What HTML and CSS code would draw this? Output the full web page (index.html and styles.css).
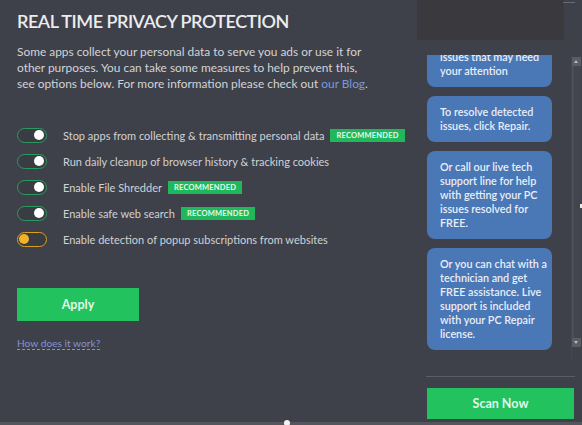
FILE: index.html
```html
<!DOCTYPE html>
<html lang="en">
<head>
<meta charset="utf-8">
<title>Real Time Privacy Protection</title>
<link rel="stylesheet" href="styles.css">
</head>
<body>
<div class="window">
  <main class="main">
    <h1 class="title">REAL TIME PRIVACY PROTECTION</h1>
    <p class="intro">Some apps collect your personal data to serve you ads or use it for<br>other purposes. You can take some measures to help prevent this,<br>see options below. For more information please check out <a class="blog" href="#">our Blog</a>.</p>
    <ul class="options">
      <li class="option"><span class="toggle on"></span><span class="label">Stop apps from collecting &amp; transmitting personal data</span><span class="badge">RECOMMENDED</span></li>
      <li class="option"><span class="toggle on"></span><span class="label">Run daily cleanup of browser history &amp; tracking cookies</span></li>
      <li class="option"><span class="toggle on"></span><span class="label">Enable File Shredder</span><span class="badge">RECOMMENDED</span></li>
      <li class="option"><span class="toggle on"></span><span class="label">Enable safe web search</span><span class="badge">RECOMMENDED</span></li>
      <li class="option"><span class="toggle off"></span><span class="label">Enable detection of popup subscriptions from websites</span></li>
    </ul>
    <button class="apply" type="button">Apply</button>
    <a class="how" href="#">How does it work?</a>
  </main>
  <aside class="side">
    <div class="side-top"><span class="top-mark"></span></div>
    <div class="chat-wrap">
      <div class="chat">
        <div class="chat-list">
          <div class="bubble">The scan has detected<br>issues that may need<br>your attention</div>
          <div class="bubble">To resolve detected<br>issues, click Repair.</div>
          <div class="bubble">Or call our live tech<br>support line for help<br>with getting your PC<br>issues resolved for<br>FREE.</div>
          <div class="bubble">Or you can chat with a<br>technician and get<br>FREE assistance. Live<br>support is included<br>with your PC Repair<br>license.</div>
        </div>
      </div>
      <div class="scrollbar">
        <span class="sb-btn up"></span>
        <span class="sb-track"><span class="sb-mark"></span></span>
        <span class="sb-btn down"></span>
      </div>
    </div>
    <div class="side-foot">
      <div class="sep"></div>
      <button class="scan" type="button">Scan Now</button>
    </div>
  </aside>
</div>
<div class="bottom-edge"><span class="edge-dot"></span></div>
</body>
</html>
```

FILE: styles.css
```css
* { box-sizing: border-box; }
html, body {
  margin: 0;
  padding: 0;
  width: 582px;
  height: 425px;
  overflow: hidden;
  background: #3f414a;
  font-family: Lato, "Open Sans", sans-serif;
}
.window {
  display: flex;
  height: 422px;
}
.main {
  width: 418px;
  flex: none;
  padding: 8px 0 0 17px;
}
.title {
  margin: 0;
  font-size: 18px;
  line-height: 26px;
  font-weight: 600;
  color: #ececee;
  letter-spacing: -0.5px;
}
.intro {
  margin: 10px 0 0;
  font-size: 11.9px;
  line-height: 16px;
  color: #d2d3d7;
  white-space: nowrap;
}
.blog {
  color: #7898de;
  text-decoration: none;
}
.options {
  list-style: none;
  margin: 35px 0 0;
  padding: 0;
  display: flex;
  flex-direction: column;
  gap: 10px;
}
.option {
  display: flex;
  align-items: center;
  height: 16px;
}
.toggle {
  position: relative;
  width: 30px;
  height: 15px;
  border-radius: 8px;
  border: 1.5px solid #2b9a5e;
  background: #3a3c44;
  flex: none;
  margin-right: 16px;
}
.toggle::after {
  content: "";
  position: absolute;
  top: 1px;
  width: 10px;
  height: 10px;
  border-radius: 50%;
}
.toggle.on::after { right: 2px; background: #ffffff; }
.toggle.off { border-color: #d9a21c; }
.toggle.off::after { left: 1px; background: #f2b12a; }
.label {
  font-size: 11px;
  color: #d0d1d5;
  white-space: nowrap;
}
.badge {
  margin-left: 6px;
  background: #1fb85b;
  color: #e9f9ef;
  font-size: 7.5px;
  font-weight: 700;
  height: 13px;
  line-height: 13px;
  padding: 0 6px;
  letter-spacing: 0.2px;
}
.apply {
  display: block;
  margin-top: 41px;
  width: 122px;
  height: 33px;
  border: 0;
  background: #22c35e;
  color: #e3f6e8;
  font-family: inherit;
  font-size: 12.5px;
  font-weight: 700;
  padding: 0;
}
.how {
  display: inline-block;
  margin-top: 16px;
  font-size: 10.2px;
  color: #8393d0;
  text-decoration: underline dashed;
  text-underline-offset: 2px;
}
.side {
  width: 164px;
  flex: none;
  display: flex;
  flex-direction: column;
}
.side-top {
  position: relative;
  height: 40px;
  width: 147px;
  margin-left: -1px;
  background: #3a3a3e;
}
.top-mark {
  position: absolute;
  top: 2px;
  right: -11px;
  width: 12px;
  height: 1px;
  background: #6a6b72;
}
.chat-wrap {
  margin-top: 15px;
  height: 307px;
  display: flex;
}
.chat {
  width: 154px;
  overflow: hidden;
  padding-left: 9px;
  border-right: 1px solid #45474f;
}
.chat-list {
  margin-top: -28px;
  display: flex;
  flex-direction: column;
  gap: 9px;
}
.bubble {
  width: 125px;
  background: #4a77b6;
  border-radius: 8px;
  padding: 9px 4px 9px 13px;
  font-size: 10.8px;
  line-height: 14px;
  font-weight: 600;
  color: #e9eef8;
  white-space: nowrap;
}
.scrollbar {
  width: 10px;
  padding-top: 2px;
  display: flex;
  flex-direction: column;
  align-items: flex-start;
}
.sb-btn {
  width: 9px;
  height: 9px;
  background: #5a5c64;
  position: relative;
  flex: none;
}
.sb-btn::after {
  content: "";
  position: absolute;
  left: 2px;
  width: 0;
  height: 0;
  border-left: 2.5px solid transparent;
  border-right: 2.5px solid transparent;
}
.sb-btn.up::after { top: 3px; border-bottom: 3px solid #b8b9be; }
.sb-btn.down::after { top: 3px; border-top: 3px solid #b8b9be; }
.sb-track {
  position: relative;
  width: 9px;
  height: 272px;
  border-left: 2px solid #4d4f58;
  background: #43454e;
}
.sb-mark {
  position: absolute;
  top: 138px;
  right: -1px;
  width: 2px;
  height: 4px;
  background: #e8e8ea;
}
.side-foot {
  padding: 14px 7px 0 8px;
}
.sep {
  height: 1px;
  background: #5b5d66;
}
.scan {
  display: block;
  margin: 11px 0 0 1px;
  width: 147px;
  height: 31px;
  border: 0;
  background: #22c35e;
  color: #e3f6e8;
  font-family: inherit;
  font-size: 12.5px;
  font-weight: 700;
  padding: 0;
}
.bottom-edge {
  position: relative;
  height: 3px;
  background: #55565d;
}
.edge-dot {
  position: absolute;
  left: 284px;
  top: -2px;
  width: 6px;
  height: 6px;
  border-radius: 50%;
  background: #f2f2f2;
}
```
